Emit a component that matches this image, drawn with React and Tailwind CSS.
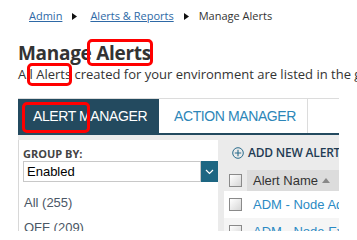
import React from "react";

function Tri() {
  return (
    <svg width="5" height="7" viewBox="0 0 5 7" className="mx-[10px]">
      <path d="M0 0 L5 3.5 L0 7 Z" fill="#111" />
    </svg>
  );
}

function Check() {
  return (
    <div className="w-[13px] h-[13px] border border-[#8a8a8a] bg-gradient-to-br from-white to-[#d6d6d6]" />
  );
}

export default function App() {
  return (
    <div className="relative w-[357px] h-[240px] bg-white overflow-hidden" style={{ fontFamily: '"Open Sans", sans-serif' }}>
      <div className="h-[231px] overflow-hidden">
        {/* breadcrumb */}
        <div className="flex items-center pl-[29px] pt-[8px] h-[24px] text-[11px] leading-[16px]">
          <span className="text-[#2e69a6] underline">Admin</span>
          <Tri />
          <span className="ml-[3px] text-[#2e69a6] underline">Alerts &amp; Reports</span>
          <Tri />
          <span className="text-[#333]">Manage Alerts</span>
        </div>
        {/* heading */}
        <h1 className="pl-[18px] mt-[17px] text-[19px] leading-[24px] font-bold text-[#333] tracking-[-0.3px]">Manage Alerts</h1>
        <p className="pl-[18px] mt-[1px] text-[13px] leading-[16px] text-[#333] whitespace-nowrap">
          All Alerts created for your environment are listed in the grid below.
        </p>
        {/* tabs + content */}
        <div className="ml-[18px] w-[321px] mt-[16px] overflow-hidden" style={{ fontFamily: '"Liberation Sans", Arial, sans-serif' }}>
          <div className="flex h-[37px] border-t border-[#dcdcdc] border-b-[2px] border-b-[#234a5f]">
            <div className="w-[141px] bg-[#234a5f] text-white text-[14px] tracking-[-0.4px] flex items-center pl-[15px]">ALERT MANAGER</div>
            <div className="w-[149px] border-r border-[#dcdcdc] text-[#2d86b8] text-[14px] tracking-[-0.4px] flex items-center pl-[15px]">ACTION MANAGER</div>
          </div>
          <div className="flex bg-[#ebebeb] h-[100px]">
            <div className="w-[200px] shrink-0 mt-[5px] bg-white border-l border-[#d8d8d8] pl-[4px]">
              <div className="mt-[7px] text-[11px] leading-[13px] font-bold text-[#444]" style={{ fontFamily: '"Open Sans", sans-serif' }}>GROUP BY:</div>
              <div className="mt-[1px] flex h-[21px]">
                <div className="w-[179px] border border-[#c8c8c8] text-[13px] text-black flex items-center pl-[3px]">Enabled</div>
                <div className="w-[17px] bg-[#1d6682] flex items-center justify-center">
                  <svg width="9" height="6" viewBox="0 0 9 6"><path d="M1 1 L4.5 4.5 L8 1" stroke="white" strokeWidth="1.2" fill="none" /></svg>
                </div>
              </div>
              <div className="mt-[13px] pl-[1px] text-[13px] leading-[16px] text-[#4b5766]">All (255)</div>
              <div className="mt-[9px] pl-[1px] text-[13px] leading-[16px] text-[#4b5766]">OFF (209)</div>
            </div>
            <div className="flex-1 min-w-0 overflow-hidden pl-[6px]">
              <div className="h-[35px] flex items-center pl-[8px] text-[12px] text-[#1f3b53] whitespace-nowrap overflow-hidden" style={{ fontFamily: '"Open Sans", sans-serif' }}>
                <svg width="12" height="12" viewBox="0 0 12 12" className="mr-[4px] shrink-0">
                  <circle cx="6" cy="6" r="5.3" stroke="#2a6c8c" strokeWidth="1" fill="none" />
                  <path d="M6 2.8 V9.2 M2.8 6 H9.2" stroke="#2a6c8c" strokeWidth="1.1" />
                </svg>
                <span className="font-semibold tracking-[-0.2px]">ADD NEW ALERT</span>
              </div>
              <div className="flex h-[21px]">
                <div className="w-[23px] shrink-0 flex items-center justify-center"><Check /></div>
                <div className="flex-1 min-w-0 overflow-hidden bg-[#dcdcdc] flex items-center pl-[6px] text-[13px] text-[#333] whitespace-nowrap">
                  Alert Name
                  <svg width="8" height="5" viewBox="0 0 8 5" className="ml-[4px] shrink-0"><path d="M0 5 L4 0 L8 5 Z" fill="#888" /></svg>
                </div>
              </div>
              <div className="flex h-[27px] bg-white">
                <div className="w-[23px] shrink-0 flex items-center justify-center"><Check /></div>
                <div className="flex-1 min-w-0 flex items-center pl-[6px] text-[13px] text-[#2b8ac4] whitespace-nowrap overflow-hidden">ADM - Node Added</div>
              </div>
              <div className="flex h-[27px] bg-[#f5f5f5]">
                <div className="w-[23px] shrink-0 flex items-center justify-center"><Check /></div>
                <div className="flex-1 min-w-0 flex items-center pl-[6px] text-[13px] text-[#2b8ac4] whitespace-nowrap overflow-hidden">ADM - Node Expired</div>
              </div>
            </div>
          </div>
        </div>
      </div>
      {/* annotation boxes */}
      <div className="absolute left-[87px] top-[39px] w-[66px] h-[27px] border-[3px] border-[#ff0000] rounded-[5px]" />
      <div className="absolute left-[27px] top-[63px] w-[45px] h-[23px] border-[3px] border-[#ff0000] rounded-[5px]" />
      <div className="absolute left-[22px] top-[102px] w-[68px] h-[31px] border-[3px] border-[#ff0000] rounded-[5px]" />
    </div>
  );
}
